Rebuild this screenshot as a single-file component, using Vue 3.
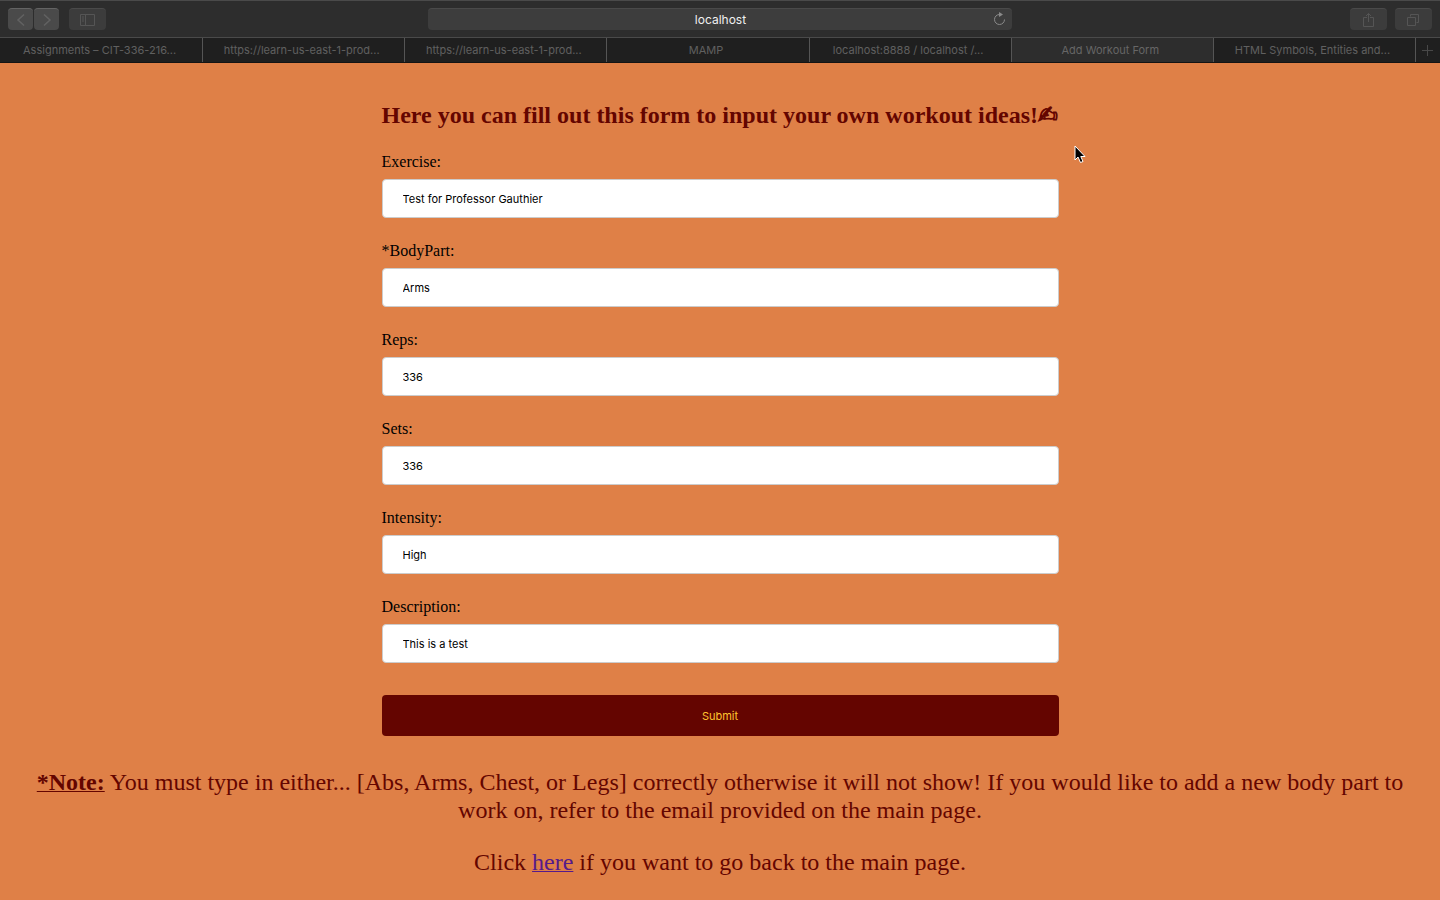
<script setup>
import { reactive } from 'vue'

const tabs = [
  'Assignments – CIT-336-216...',
  'https://learn-us-east-1-prod...',
  'https://learn-us-east-1-prod...',
  'MAMP',
  'localhost:8888 / localhost /...',
  'Add Workout Form',
  'HTML Symbols, Entities and...',
]
const activeTab = 5

const fields = reactive([
  { id: 'exercise', label: 'Exercise:', value: 'Test for Professor Gauthier' },
  { id: 'bodypart', label: '*BodyPart:', value: 'Arms' },
  { id: 'reps', label: 'Reps:', value: '336' },
  { id: 'sets', label: 'Sets:', value: '336' },
  { id: 'intensity', label: 'Intensity:', value: 'High' },
  { id: 'description', label: 'Description:', value: 'This is a test' },
])
</script>

<template>
  <div class="window">
    <header class="chrome">
      <div class="toolbar">
        <div class="side">
          <div class="nav">
            <button class="tool arrow" type="button" aria-label="Back">
              <svg width="10" height="14" viewBox="0 0 10 14"><path d="M8 1.5 2 7l6 5.500" /></svg>
            </button>
            <button class="tool arrow" type="button" aria-label="Forward">
              <svg width="10" height="14" viewBox="0 0 10 14"><path d="M2 1.500 8 7l-6 5.500" /></svg>
            </button>
          </div>
          <button class="tool" type="button" aria-label="Sidebar">
            <svg width="15" height="12" viewBox="0 0 15 12">
              <path d="M.5.5h14v11H.5zM5.500.5v11M2 3h2M2 5h2M2 7h2" />
            </svg>
          </button>
        </div>
        <div class="address">
          <input class="url" type="text" value="localhost" aria-label="Address" />
          <button class="reload" type="button" aria-label="Reload">
            <svg width="13" height="14" viewBox="0 0 13 14">
              <path d="M6.500 2.500a5 5 0 1 0 5 5" />
              <path class="solid" d="M6 0v5l4-2.500z" />
            </svg>
          </button>
        </div>
        <div class="side end">
          <button class="tool" type="button" aria-label="Share">
            <svg width="11" height="16" viewBox="0 0 11 16">
              <path d="M4 5.500H.5v9h10v-9H7M5.500 10V1.500M3 4l2.500-2.500L8 4" />
            </svg>
          </button>
          <button class="tool" type="button" aria-label="Show all tabs">
            <svg width="13" height="13" viewBox="0 0 13 13">
              <path d="M.5 4.500h8v8h-8zM3.500 3.500v-2h8v8h-2" />
            </svg>
          </button>
        </div>
      </div>
      <nav class="tabs" aria-label="Tabs">
        <button
          v-for="(tab, i) in tabs"
          :key="i"
          type="button"
          class="tab"
          :class="{ active: i === activeTab }"
        >{{ tab }}</button>
        <button class="plus" type="button" aria-label="New tab">
          <svg width="11" height="11" viewBox="0 0 11 11"><path d="M5.500 0v11M0 5.500h11" /></svg>
        </button>
      </nav>
    </header>

    <main class="page">
      <form class="form" @submit.prevent>
        <h1>Here you can fill out this form to input your own workout ideas!<span class="hand">✍</span></h1>
        <div v-for="f in fields" :key="f.id" class="field">
          <label :for="f.id">{{ f.label }}</label>
          <input :id="f.id" v-model="f.value" type="text" />
        </div>
        <button class="submit" type="submit">Submit</button>
      </form>
      <p class="note">
        <b>*Note:</b> You must type in either... [Abs, Arms, Chest, or Legs] correctly otherwise it
        will not show! If you would like to add a new body part to work on, refer to the email
        provided on the main page.
      </p>
      <p class="note">Click <a href="#">here</a> if you want to go back to the main page.</p>
    </main>

    <svg class="cursor" width="14" height="20" viewBox="0 0 14 20" aria-hidden="true">
      <path d="M1 1v14l3-3 2.500 5.500 2.500-1L6.800 11.500H11z" />
    </svg>
  </div>
</template>

<style>
body {
  margin: 0;
  background: #df8047;
}
</style>

<style scoped>
.window {
  position: relative;
  min-height: 100vh;
  background: #df8047;
  font-family: "Liberation Serif", "Times New Roman", serif;
}
button,
input {
  box-sizing: border-box;
  margin: 0;
  border: 0;
  font-family: Inter, "Liberation Sans", sans-serif;
  font-size: 11px;
}
svg {
  display: block;
  fill: none;
  stroke: currentColor;
}
.chrome {
  background: #2d2d2d;
  border-top: 1px solid #4a4a4a;
  border-bottom: 1px solid #141414;
}
.toolbar {
  display: flex;
  align-items: center;
  justify-content: space-between;
  height: 36px;
  padding: 0 8px;
}
.side {
  display: flex;
  flex: 1;
  gap: 10px;
}
.end {
  justify-content: flex-end;
  gap: 8px;
}
.nav {
  display: flex;
  gap: 1px;
}
.tool {
  display: flex;
  align-items: center;
  justify-content: center;
  width: 37px;
  height: 22px;
  padding: 0;
  border-top: 1px solid #4a4a4a;
  border-radius: 4px;
  background: #3c3c3c;
  color: #555;
}
.arrow {
  width: 25px;
  border-top-color: #646464;
  background: #4a4a4a;
  color: #626262;
}
.arrow svg {
  stroke-width: 1.5;
}
.address {
  position: relative;
  width: 41%;
}
.url {
  display: block;
  width: 100%;
  height: 22px;
  padding: 0 23px 0 24px;
  border-top: 1px solid #4a4a4a;
  border-radius: 4px;
  background: #3d3d3d;
  color: #f0f0f0;
  font-size: 12px;
  text-align: center;
}
.reload {
  position: absolute;
  top: 4px;
  right: 6px;
  padding: 0;
  background: none;
  color: #8a8a8a;
}
.solid {
  fill: currentColor;
  stroke: none;
}
.tabs {
  display: flex;
  height: 24px;
  border-top: 1px solid #4a4a4a;
}
.tab {
  flex: 1 1 0;
  min-width: 0;
  padding: 0 4px 0 0;
  border-left: 1px solid #1f1f1f;
  background: #1f1f1f;
  color: #606060;
  white-space: nowrap;
}
.tab + .tab,
.plus {
  border-left: 1px solid #555;
}
.tabs .active {
  background: #2d2d2d;
  color: #666;
}
.plus {
  display: flex;
  align-items: center;
  justify-content: center;
  width: 25px;
  padding: 0;
  background: #1f1f1f;
  color: #484848;
}
.page {
  padding: 38px 32px 0;
  color: #640500;
}
.form {
  width: 677px;
  max-width: 100%;
  margin: 0 auto;
}
h1 {
  margin: 0 0 24px;
  font-size: 24px;
  line-height: 28px;
  white-space: nowrap;
}
.hand {
  font-family: "DejaVu Sans", sans-serif;
  -webkit-text-stroke: 1px #640500;
}
.field {
  margin-bottom: 24px;
}
label {
  display: block;
  margin-bottom: 8px;
  color: #000;
  font-size: 16px;
  line-height: 18px;
}
.field input {
  display: block;
  width: 100%;
  height: 39px;
  padding: 0 20px;
  border: 1px solid #ccc;
  border-radius: 4px;
  background: #fff;
  color: #000;
}
.submit {
  display: block;
  width: 100%;
  height: 41px;
  margin-top: 32px;
  border-radius: 4px;
  background: #640500;
  color: #ffc52f;
}
.note {
  margin: 0 0 24px;
  font-size: 24px;
  line-height: 28px;
  text-align: center;
}
.form + .note {
  margin-top: 32px;
}
b {
  text-decoration: underline;
}
a {
  color: #551a8b;
}
.note b,
.note a {
  text-decoration-thickness: 1px;
}
.cursor {
  position: absolute;
  top: 145px;
  left: 1074px;
  fill: #000;
  stroke: #fff;
}
</style>
